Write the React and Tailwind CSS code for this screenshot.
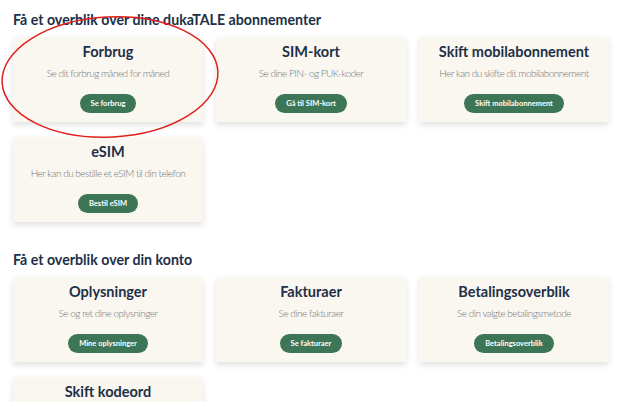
const subscriptionCards = [
  { title: 'Forbrug', text: 'Se dit forbrug måned for måned', cta: 'Se forbrug' },
  { title: 'SIM-kort', text: 'Se dine PIN- og PUK-koder', cta: 'Gå til SIM-kort' },
  { title: 'Skift mobilabonnement', text: 'Her kan du skifte dit mobilabonnement', cta: 'Skift mobilabonnement' },
  { title: 'eSIM', text: 'Her kan du bestille et eSIM til din telefon', cta: 'Bestil eSIM' },
];

const accountCards = [
  { title: 'Oplysninger', text: 'Se og ret dine oplysninger', cta: 'Mine oplysninger' },
  { title: 'Fakturaer', text: 'Se dine fakturaer', cta: 'Se fakturaer' },
  { title: 'Betalingsoverblik', text: 'Se din valgte betalingsmetode', cta: 'Betalingsoverblik' },
  { title: 'Skift kodeord', text: 'Skift dit kodeord', cta: 'Skift kodeord' },
];

function Card({ title, text, cta }) {
  return (
    <div className="h-[85px] bg-[#faf6f0] shadow-[0_3px_6px_rgba(0,0,0,0.12)] flex flex-col items-center pt-[5px]">
      <h3 className="text-[14.5px] leading-[20px] font-bold text-[#1d3047]">{title}</h3>
      <p className="mt-[4px] text-[10px] tracking-[-0.5px] leading-[14px] font-light text-[#72767b]">{text}</p>
      <button className="mt-[14px] h-[19px] px-[11px] rounded-full bg-[#3d7656] text-white text-[7.5px] font-bold">
        {cta}
      </button>
    </div>
  );
}

function Section({ title, cards }) {
  return (
    <section>
      <h2 className="text-[14.2px] leading-[20px] font-bold text-[#1d3047] mb-[7px]">{title}</h2>
      <div className="grid grid-cols-3 w-[596px] gap-x-[13px] gap-y-[15px]">
        {cards.map(c => <Card key={c.title} {...c} />)}
      </div>
    </section>
  );
}

export default function App() {
  return (
    <div className="relative w-[640px] h-[402px] overflow-hidden bg-white pl-[13px] pt-[10px] font-['Lato',sans-serif]">
      <div className="flex flex-col gap-[28px]">
        <Section title="Få et overblik over dine dukaTALE abonnementer" cards={subscriptionCards} />
        <Section title="Få et overblik over din konto" cards={accountCards} />
      </div>

      {/* red annotation circle */}
      <svg className="absolute left-0 top-0 pointer-events-none" width="240" height="150">
        <ellipse cx="110" cy="77" rx="108" ry="60" fill="none" stroke="#e0201c" strokeWidth="1.5" transform="rotate(-3 110 77)" />
      </svg>
    </div>
  );
}
